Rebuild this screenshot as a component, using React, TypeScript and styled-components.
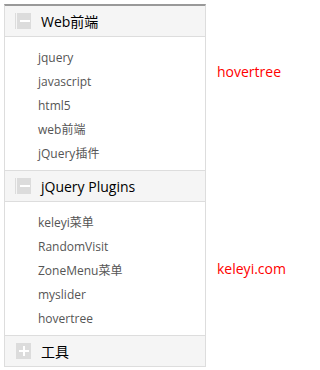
import styled, { createGlobalStyle } from "styled-components";

const groups = [
  { title: "Web前端", open: true, items: ["jquery", "javascript", "html5", "web前端", "jQuery插件"] },
  { title: "jQuery Plugins", open: true, items: ["keleyi菜单", "RandomVisit", "ZoneMenu菜单", "myslider", "hovertree"] },
  { title: "工具", open: false, items: [] },
];

function ToggleIcon({ open }: { open: boolean }) {
  return (
    <svg width="16" height="16" viewBox="0 0 16 16">
      {open ? (
        <>
          <rect x="0" y="0" width="1" height="16" fill="#dcdcdc" />
          <rect x="2" y="0" width="14" height="16" fill="#dcdcdc" />
          <rect x="5" y="7" width="10" height="2" fill="#fff" />
        </>
      ) : (
        <>
          <rect x="1" y="0" width="15" height="16" fill="#dcdcdc" />
          <rect x="4" y="7" width="10" height="2" fill="#fff" />
          <rect x="8" y="3" width="2" height="10" fill="#fff" />
        </>
      )}
    </svg>
  );
}

export default function App() {
  return (
    <>
      <GlobalStyle />
      <Page>
        <Panel>
          {groups.map((g) => (
            <div key={g.title}>
              <Header>
                <ToggleIcon open={g.open} />
                <Title>{g.title}</Title>
              </Header>
              {g.open && (
                <List>
                  {g.items.map((it) => (
                    <Item key={it}>{it}</Item>
                  ))}
                </List>
              )}
            </div>
          ))}
        </Panel>
        <Side>
          <RedText $top={58}>hovertree</RedText>
          <RedText $top={177}>keleyi.com</RedText>
        </Side>
      </Page>
    </>
  );
}

const GlobalStyle = createGlobalStyle`
  body {
    margin: 0;
    background: #fff;
    font-family: "Open Sans", "Noto Sans CJK SC", sans-serif;
  }
`;

const Page = styled.div`
  display: flex;
  padding: 4px;
`;

const Panel = styled.div`
  width: 200px;
  border: 1px solid #ddd;
  border-top: 2px solid #999;
  border-bottom: none;
`;

const Header = styled.div`
  display: flex;
  align-items: center;
  gap: 10px;
  height: 30px;
  padding-left: 10px;
  background: #f5f5f5;
  border-bottom: 1px solid #ddd;
`;

const Title = styled.span`
  font-size: 14px;
  color: #000;
`;

const List = styled.div`
  padding: 9px 0 4px 33px;
  border-bottom: 1px solid #ddd;
`;

const Item = styled.div`
  height: 24px;
  line-height: 24px;
  font-size: 12px;
  color: #555;
`;

const Side = styled.div`
  display: flex;
  flex-direction: column;
  padding-left: 11px;
`;

const RedText = styled.div<{ $top: number }>`
  margin-top: ${(p) => p.$top}px;
  font-size: 14px;
  line-height: 20px;
  color: red;
`;
